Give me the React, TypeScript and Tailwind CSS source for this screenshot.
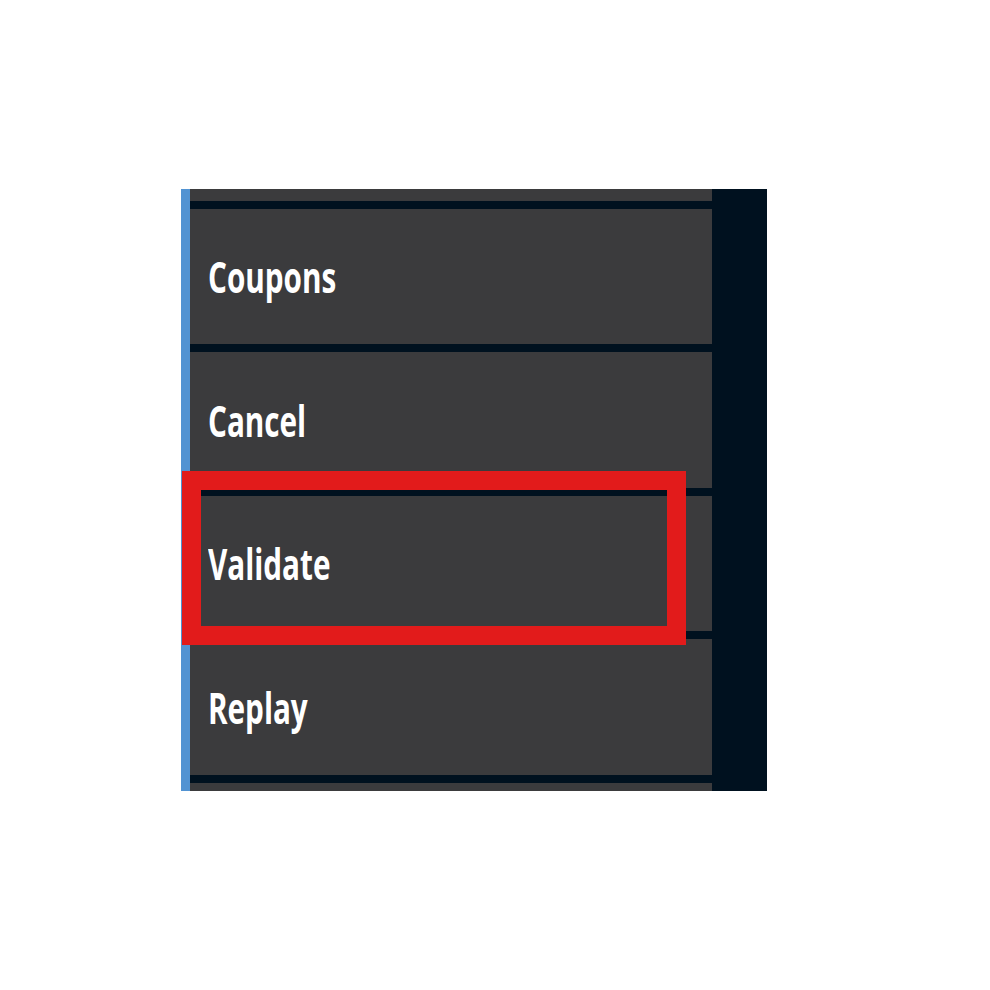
const rows = [
  { label: "", h: "h-[12px]" },
  { label: "Coupons", h: "h-[135px]" },
  { label: "Cancel", h: "h-[136px]" },
  { label: "Validate", h: "h-[135px]" },
  { label: "Replay", h: "h-[136px]" },
  { label: "", h: "h-[8px]" },
];

const App = () => (
  <div className="min-h-screen bg-white pt-[189px] pl-[181px]">
    <div className="relative flex w-[586px] bg-[#00111f]">
      {/* accent strip */}
      <div className="w-[9px] bg-[#5293d2]" />

      <div className="flex w-[522px] flex-col gap-[8px]">
        {rows.map((row, i) => (
          <div key={i} className={`${row.h} flex items-center bg-[#3b3b3d] pl-[18px]`}>
            {row.label && (
              <span
                className="inline-block origin-left scale-x-[0.69] text-[43px] font-bold leading-none text-white"
                style={{ fontFamily: '"Open Sans", "Liberation Sans", sans-serif' }}
              >
                {row.label}
              </span>
            )}
          </div>
        ))}
      </div>

      <div className="w-[55px]" />

      {/* highlight */}
      <div className="absolute left-[1px] top-[282px] h-[174px] w-[504px] border-[19px] border-[#e21b1b]" />
    </div>
  </div>
);

export default App;
